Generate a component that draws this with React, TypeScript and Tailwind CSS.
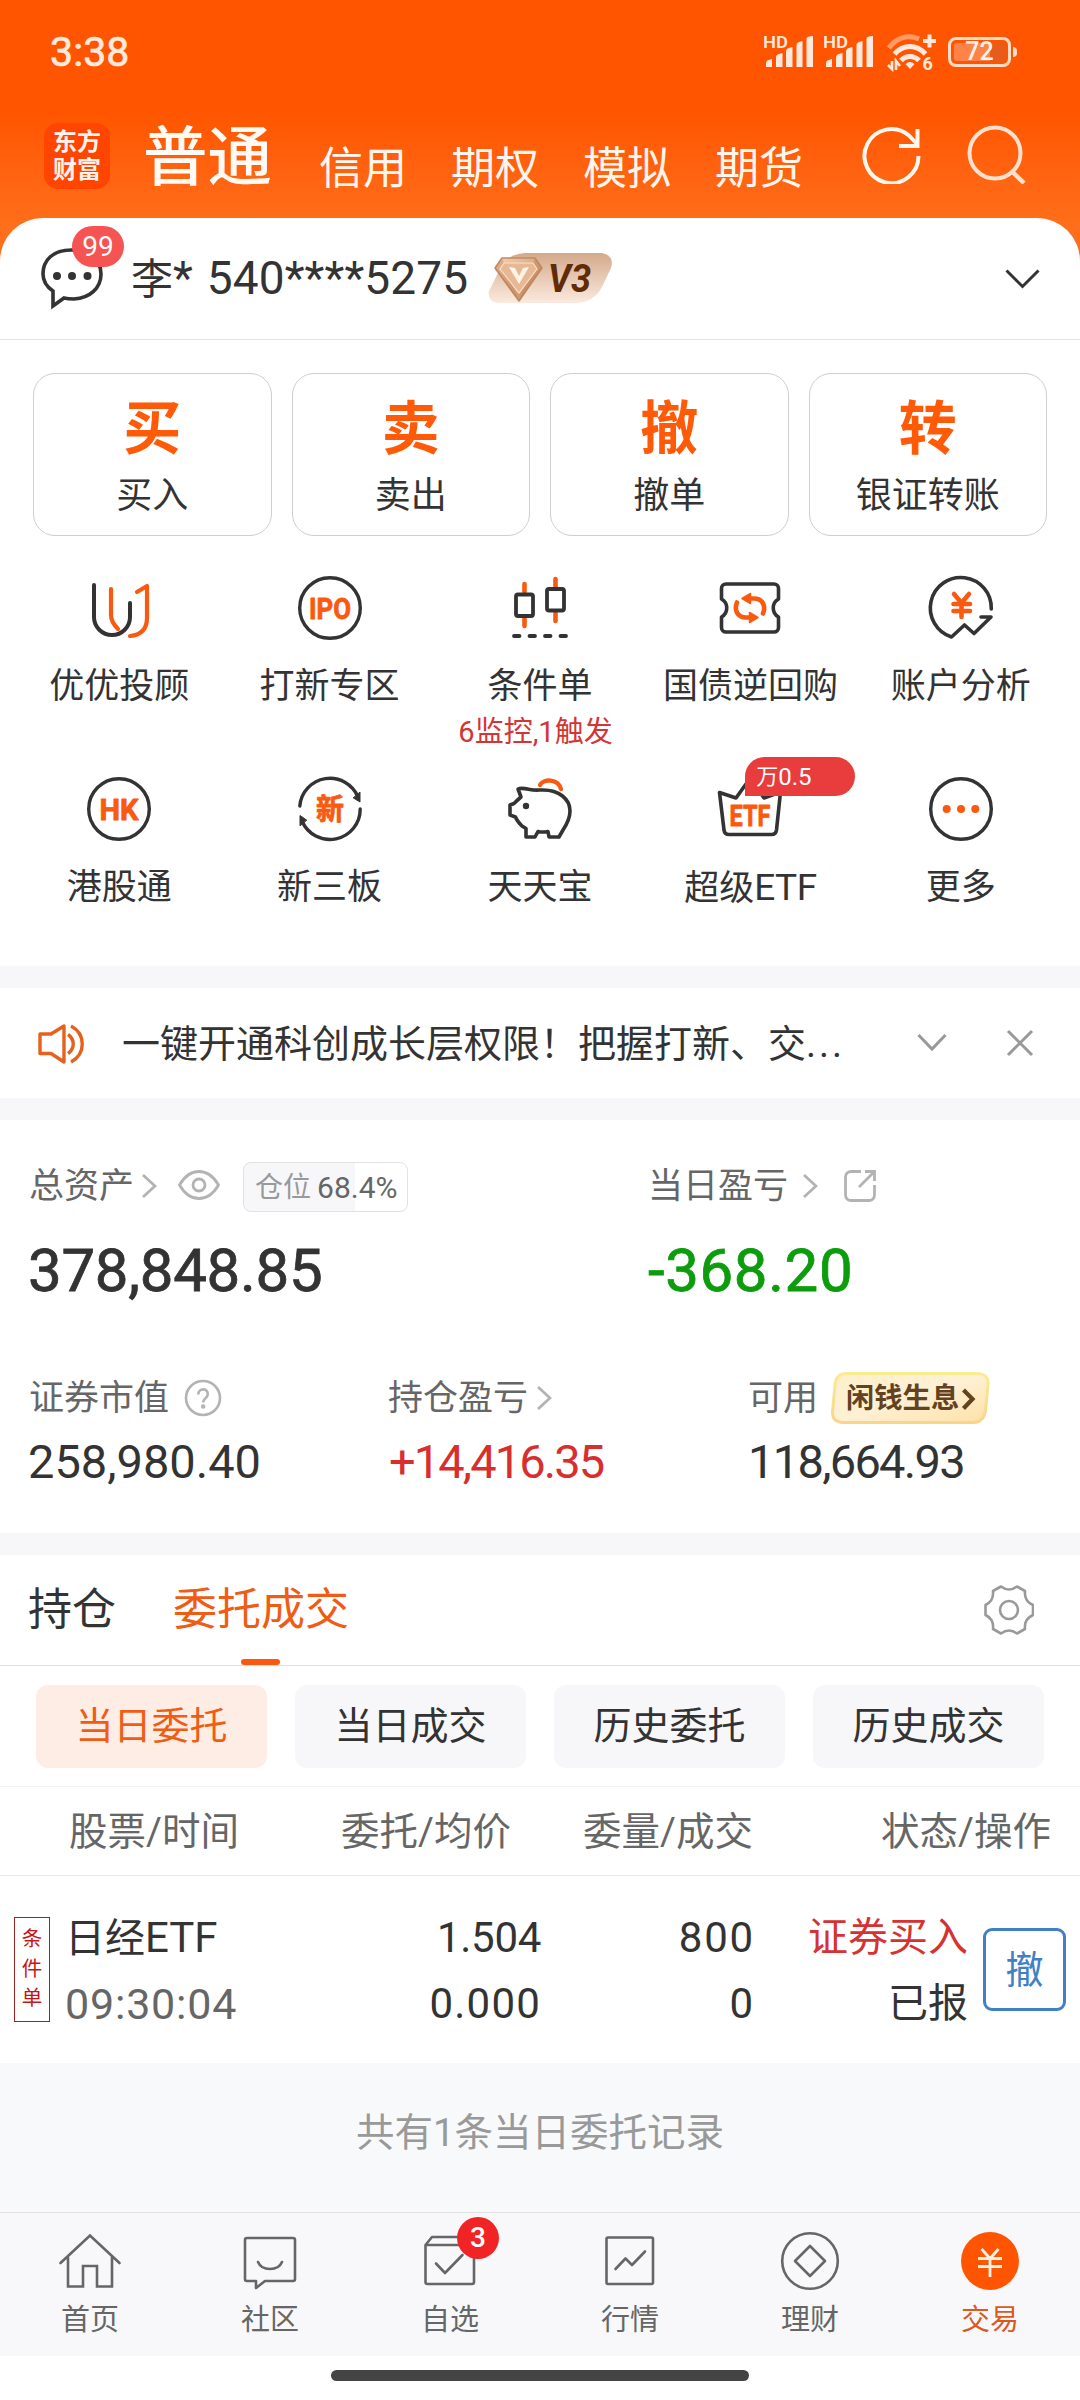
import React from "react";

const DARK = "#333333";
const ORANGE = "#fa5a0f";
const svgFont = "Roboto, 'Noto Sans CJK SC', sans-serif";

type Kids = { children?: React.ReactNode };

function Icon({ children, size = 72 }: Kids & { size?: number }) {
  return (
    <svg
      width={size}
      height={size}
      viewBox={`0 0 ${size} ${size}`}
      fill="none"
      strokeLinecap="round"
      strokeLinejoin="round"
      className="block shrink-0"
    >
      {children}
    </svg>
  );
}

function Signal() {
  return (
    <svg width="50" height="36" viewBox="0 0 50 36" className="block shrink-0" fill="#ffe9dc">
      <text x="-1" y="14" fontFamily={svgFont} fontWeight="600" fontSize="16.5" textLength="25" lengthAdjust="spacingAndGlyphs">
        HD
      </text>
      <path d="M2 33v-4q0-3 6-4v8z" />
      <path d="M12 33V23q0-3 6.500-4v14z" />
      <path d="M22 33V17q0-3 6.500-4v20z" />
      <path d="M32.500 33V11q0-3 6-4v26z" />
      <path d="M42.500 33V5q0-3 6.500-3v31z" />
    </svg>
  );
}

function Wifi() {
  return (
    <svg width="54" height="42" viewBox="0 0 54 42" className="block shrink-0" fill="none" stroke="#ffe9dc" strokeWidth="5">
      <path d="M4 17C11 7 22 3 34 8" stroke="#ff9a66" />
      <path d="M9.500 23c9-10 22-10 31 0" />
      <path d="M16 29.500c5-5.500 13-5.500 18 0" />
      <path d="M20.500 33q4.500-4 9 0l-4.500 5z" fill="#ffe9dc" stroke="none" />
      <path d="M44.500 3.500v13M38 10h13" strokeWidth="4" />
      <path d="M7 30v8l-4-4M11 39v-9l4 5" strokeWidth="2.600" />
      <text x="37.500" y="39" fontFamily={svgFont} fontSize="18" fontWeight="700" fill="#ffe9dc" stroke="none">
        6
      </text>
    </svg>
  );
}

function StatusBar() {
  return (
    <div className="flex h-[103px] items-center justify-between pl-[50px] pr-[63px]">
      <span className="mt-[1px] text-[41px] leading-none tracking-[0.100px] text-[#ffe9dc] [-webkit-text-stroke:0.700px_#ffe9dc]">3:38</span>
      <div className="flex items-center">
        <Signal />
        <div className="w-[10px]" />
        <Signal />
        <div className="w-[11px]" />
        <Wifi />
        <div className="ml-[9px] flex h-[30px] w-[63px] items-center rounded-[8px] border-[3px] border-[#ffdcc8] p-[3px]">
          <span className="w-full rounded-[3px] bg-gradient-to-r from-[#ff8347] from-[70%] to-[#e55c1c] to-[70%] text-center text-[25px] font-medium leading-[18px] text-[#fff3ec]">
            72
          </span>
        </div>
        <div className="ml-[2px] h-[10px] w-[4px] rounded-r bg-[#ffdcc8]" />
      </div>
    </div>
  );
}

function TopTabs() {
  return (
    <div className="flex h-[115px] items-start pl-[44px] pr-[54px]">
      <div className="mt-[20px] flex size-[66px] flex-col items-center justify-center rounded-[14px] bg-[#ff4500] text-[24px] font-bold leading-[28px] text-[#fff3ec]">
        <span>东方</span>
        <span>财富</span>
      </div>
      <span className="ml-[33px] mt-[15px] text-[64.500px] font-medium leading-[80px] text-[#fffaf4]">普通</span>
      <div className="ml-[47px] mt-[36px] flex gap-[44px] text-[44px] leading-[60px] text-[#fff6ee]">
        <span>信用</span>
        <span>期权</span>
        <span>模拟</span>
        <span>期货</span>
      </div>
      <div className="ml-auto mt-[21px] flex gap-[45px]">
        <Icon size={60}>
          <path d="M57.500 32A27 27 0 1 1 48 11.500L56 20" stroke="#fff6ee" strokeWidth="4" strokeLinecap="butt" />
          <path d="M56.500 5v17H38" stroke="#fff6ee" strokeWidth="4" strokeLinecap="butt" strokeLinejoin="miter" />
        </Icon>
        <Icon size={60}>
          <circle cx="29" cy="29" r="25.500" stroke="#ffe0cc" strokeWidth="4" />
          <path d="M46 47.500L58 59" stroke="#ffe0cc" strokeWidth="4.500" strokeLinecap="butt" />
        </Icon>
      </div>
    </div>
  );
}

function VipBadge() {
  return (
    <div className="relative ml-[20px] mt-[-1px] h-[50px] w-[126px]">
      <svg width="126" height="50" viewBox="0 0 126 50" className="block">
        <defs>
          <linearGradient id="vip" x1="0" y1="0" x2="0" y2="1">
            <stop offset="0" stopColor="#d3a98a" />
            <stop offset="1" stopColor="#fbeadf" />
          </linearGradient>
          <linearGradient id="gem" x1="0" y1="0" x2="1" y2="1">
            <stop offset="0" stopColor="#f7d4b4" />
            <stop offset="1" stopColor="#bd8055" />
          </linearGradient>
        </defs>
        <path d="M37 0H114q13 3 9 15l-9 19q-8 15-25 16H9Q-1 48 1 38L13 14Q20 1 37 0z" fill="url(#vip)" />
        <path d="M14 5H47l7 10-23 33L7 15z" fill="url(#gem)" stroke="#c38a62" strokeWidth="1.500" strokeLinejoin="round" />
        <path d="M14 5l-7 10 24 33zM47 5l7 10-23 33z" fill="#b9784c" opacity=".35" />
        <path d="M16 10H45l4 6-18 24L12 16z" fill="#e6b894" stroke="#fbe0c8" strokeWidth="1.200" />
        <path d="M21 14l10 17 10-17-6 1-4 8-4-8z" fill="#fff3e4" />
        <text x="60" y="39" fontFamily={svgFont} fontSize="39" fontWeight="700" fontStyle="italic" fill="#5f2c06" textLength="43" lengthAdjust="spacingAndGlyphs">
          V3
        </text>
      </svg>
    </div>
  );
}

function AccountRow() {
  return (
    <div className="flex h-[122px] items-center border-b border-[#e4e4e4] pl-[40px] pr-[40px]">
      <div className="relative mt-[-1px]">
        <svg width="64" height="64" viewBox="0 0 64 64" fill="none" className="block">
          <path
            d="M13 45v15l11-8c4 1 7 1 10 1 16-1 27-11 27-25S50 4 31.500 4 3 14 3 28c0 7 4 13 10 17z"
            stroke={DARK}
            strokeWidth="3.600"
          />
          <circle cx="17" cy="30" r="4" fill={DARK} />
          <circle cx="32" cy="30" r="4" fill={DARK} />
          <circle cx="47.500" cy="30" r="4" fill={DARK} />
        </svg>
        <div className="absolute left-[32px] top-[-20px] flex h-[41px] w-[52px] items-center justify-center rounded-full bg-[#f65353] text-[28px] leading-none text-white">
          99
        </div>
      </div>
      <div className="ml-[27px] whitespace-pre text-[46px] leading-[60px] text-[#333]">
        <span className="text-[42px]">李</span>*<span className="inline-block w-[14px]" />
        <span className="tracking-[0.100px]">540****5275</span>
      </div>
      <VipBadge />
      <svg width="35" height="20" viewBox="0 0 35 20" fill="none" className="ml-auto block">
        <path d="M1.500 1.500l16 16 16-16" stroke={DARK} strokeWidth="3" />
      </svg>
    </div>
  );
}

const actions = [
  ["买", "买入"],
  ["卖", "卖出"],
  ["撤", "撤单"],
  ["转", "银证转账"],
];

function Actions() {
  return (
    <div className="grid grid-cols-4 gap-[20px] px-[33px] pt-[33px]">
      {actions.map(([big, label]) => (
        <div key={label} className="flex h-[163px] flex-col items-center rounded-[22px] border border-[#cfcfcf]">
          <span className="mt-[15px] text-[58px] font-bold leading-[80px] text-[#ff5a08]">{big}</span>
          <span className="mt-[2px] text-[36px] leading-[50px] text-[#333]">{label}</span>
        </div>
      ))}
    </div>
  );
}

function IconText({ children, w, y }: Kids & { w: number; y: number }) {
  return (
    <text
      x={36 - w / 2}
      y={y}
      fontFamily={svgFont}
      fontWeight="700"
      fontSize="29"
      fill={ORANGE}
      stroke={ORANGE}
      strokeWidth="0.800"
      textLength={w}
      lengthAdjust="spacingAndGlyphs"
    >
      {children}
    </text>
  );
}

const Ring = () => <circle cx="36" cy="36" r="30.300" stroke={DARK} strokeWidth="3.400" />;

const services = [
  {
    label: "优优投顾",
    icon: (
      <Icon>
        <path d="M11 13V45a18 18 0 0 0 36 0V31" stroke={DARK} strokeWidth="4" />
        <path d="M28 17V43c0 6 3 10 7 14M54 20L64 14V46c0 11-6 17-17 18" stroke={ORANGE} strokeWidth="4.200" />
      </Icon>
    ),
  },
  {
    label: "打新专区",
    icon: (
      <Icon>
        <Ring />
        <IconText w={42} y={46.5}>IPO</IconText>
      </Icon>
    ),
  },
  {
    label: "条件单",
    note: "6监控,1触发",
    icon: (
      <Icon>
        <path d="M20.500 12v8M20.500 46v8M51.500 7v8M51.500 41v8" stroke={ORANGE} strokeWidth="4.600" />
        <rect x="12" y="22.500" width="17" height="21.500" rx="2" stroke={DARK} strokeWidth="3.800" />
        <rect x="43" y="17" width="17" height="21.500" rx="2" stroke={DARK} strokeWidth="3.800" />
        <path d="M10 64h5.500M25.500 64h5.500M41 64h5.500M56.500 64h5.500" stroke={DARK} strokeWidth="3.800" />
      </Icon>
    ),
  },
  {
    label: "国债逆回购",
    icon: (
      <Icon>
        <path
          d="M12 12H60a4.500 4.500 0 0 1 4.500 4.500V27c-7 4-7 14 0 18V55.500A4.500 4.500 0 0 1 60 60H12a4.500 4.500 0 0 1-4.500-4.500V45c7-4 7-14 0-18V16.500A4.500 4.500 0 0 1 12 12z"
          stroke={DARK}
          strokeWidth="3.600"
        />
        <path d="M36 26.500h4c9 0 12 8 9 15M36 45.500h-4c-9 0-12-8-9-15" stroke={ORANGE} strokeWidth="4.600" />
        <path d="M28 26.500l8.500-5v10zM44 45.500l-8.500-5v10z" fill={ORANGE} stroke={ORANGE} strokeWidth="1.500" />
      </Icon>
    ),
  },
  {
    label: "账户分析",
    icon: (
      <Icon>
        <path d="M66.300 37A30.500 30.500 0 1 0 26.500 65L39.500 53l9.500 8.500L66 45H56" stroke={DARK} strokeWidth="3.600" />
        <path d="M29 22l7.500 9 7.500-9M36.500 31v14M28.500 32h16.500M28.500 39h16.500" stroke={ORANGE} strokeWidth="4.600" />
      </Icon>
    ),
  },
  {
    label: "港股通",
    icon: (
      <Icon>
        <Ring />
        <IconText w={39} y={46.5}>HK</IconText>
      </Icon>
    ),
  },
  {
    label: "新三板",
    icon: (
      <Icon>
        <path d="M5.800 33A30.300 30.300 0 0 1 64 24M66.200 36A30.300 30.300 0 0 1 8 48" stroke={DARK} strokeWidth="3.400" />
        <path d="M66 19.500v9.500l-6.500-4zM6 52.500V42.500l6.500 4.500z" fill={DARK} stroke={DARK} strokeWidth="1" />
        <IconText w={28} y={46.5}>新</IconText>
      </Icon>
    ),
  },
  {
    label: "天天宝",
    icon: (
      <Icon>
        <path
          d="M17 24l-3-8c3-1.500 7-.5 12 .5 4 1 8 .5 13 .5 16 0 27 9 27 21 0 7-3 13-7 19l-4 7H45l-1-5.500c-4 .8-7 .8-10 0L31 64H22V55.500L18 53c-3-3-5-5-6.500-9L6 42V32l4-1.500c2-2 4-4 7-6.500z"
          stroke={DARK}
          strokeWidth="3.600"
        />
        <circle cx="22" cy="33" r="3.200" fill={DARK} />
        <path d="M36 12c3-6 18-7 21 4" stroke={ORANGE} strokeWidth="4.400" />
      </Icon>
    ),
  },
  {
    label: "超级ETF",
    badge: "0.5",
    icon: (
      <Icon>
        <path d="M5.500 19.500L22 25 32 11q4-5 8 0L50 25l16.500-6L62.500 57q-.6 4.500-5 4.500H15q-4.500 0-5-4.500z" stroke={DARK} strokeWidth="3.600" />
        <IconText w={41} y={52.5}>ETF</IconText>
      </Icon>
    ),
  },
  {
    label: "更多",
    icon: (
      <Icon>
        <Ring />
        <circle cx="21.700" cy="36" r="4" fill={ORANGE} />
        <circle cx="36" cy="36" r="4" fill={ORANGE} />
        <circle cx="50.300" cy="36" r="4" fill={ORANGE} />
      </Icon>
    ),
  },
];

function Services() {
  return (
    <div className="grid h-[430px] grid-cols-5 grid-rows-[201px_229px] px-[14px] pt-[36px]">
      {services.map((s) => (
        <div key={s.label} className="relative flex flex-col items-center">
          {s.icon}
          <span className="mt-[18px] whitespace-nowrap text-[35px] leading-[50px] text-[#333]">
            {s.label === "超级ETF" ? (
              <>
                超级<span className="text-[37px] tracking-[-0.500px]">ETF</span>
              </>
            ) : (
              s.label
            )}
          </span>
          {s.note && <span className="mr-[9px] whitespace-nowrap text-[29px] leading-[40px] text-[#d43535]">{s.note}</span>}
          {s.badge && (
            <div className="absolute left-[100px] top-[-16px] flex h-[39px] w-[110px] items-center rounded-[20px] rounded-bl-none bg-[#e93c3c] pl-[11px] text-[24px] leading-none text-white">
              <span className="text-[22px]">万</span>
              {s.badge}
            </div>
          )}
        </div>
      ))}
    </div>
  );
}

function Notice() {
  return (
    <div className="flex h-[110px] items-center bg-white pl-[36px] pr-[46px]">
      <svg width="50" height="44" viewBox="0 0 50 44" fill="none" stroke="#e5611d" strokeWidth="3.400" className="mt-[1px] block shrink-0">
        <path d="M4 12h11L28 4v36L15 31.500H4z" strokeLinejoin="round" />
        <path d="M32 12.500c7 5 7 14 0 19M35 4c15 8 15 28 0 36" />
      </svg>
      <span className="ml-[36px] mt-[2px] whitespace-nowrap text-[38px] leading-[56px] text-[#333]">
        一键开通科创成长层权限！把握打新、交<span className="tracking-[3px]">...</span>
      </span>
      <svg width="30" height="20" viewBox="0 0 30 20" fill="none" className="ml-auto block">
        <path d="M1.500 2l13.500 14 13.500-14" stroke="#999" strokeWidth="3" />
      </svg>
      <svg width="28" height="28" viewBox="0 0 28 28" fill="none" className="ml-[59px] block">
        <path d="M2 2l24 24M26 2L2 26" stroke="#999" strokeWidth="3" />
      </svg>
    </div>
  );
}

function Chevron({ className }: { className: string }) {
  return (
    <svg width="16" height="26" viewBox="0 0 16 26" fill="none" className={className}>
      <path d="M2 2l12 11L2 24" stroke="#b3b3b3" strokeWidth="2.800" />
    </svg>
  );
}

function Assets() {
  return (
    <div className="h-[413px] bg-white pt-[40px]">
      <div className="grid h-[50px] grid-cols-[648px_1fr]">
        <div className="flex items-center pl-[29px] text-[35px] leading-[50px] text-[#666]">
          <span className="mt-[2px]">总资产</span>
          <Chevron className="ml-[7px] block" />
          <svg width="44" height="32" viewBox="0 0 44 32" fill="none" stroke="#b3b3b3" strokeWidth="2.800" className="ml-[20px] mt-[-2px] block">
            <path d="M2.500 16C8 6.500 15 2.500 22 2.500S36 6.500 41.500 16C36 25.500 29 29.500 22 29.500S8 25.500 2.500 16z" />
            <circle cx="22" cy="16" r="6" />
          </svg>
          <div className="ml-[22px] mt-[1px] flex h-[50px] w-[165px] items-center rounded-[8px] border border-[#e2e2e2] bg-gradient-to-r from-[#f7f7fa] from-[68.400%] to-white to-[68.400%] pl-[11px]">
            <span className="mt-[2px] text-[28px] leading-none text-[#999]">仓位</span>
            <span className="ml-[6px] mt-[2px] text-[30px] leading-none text-[#666]">68.4%</span>
          </div>
        </div>
        <div className="flex items-center text-[35px] leading-[50px] text-[#666]">
          <span className="mt-[2px]">当日盈亏</span>
          <Chevron className="ml-[14px] block" />
          <svg width="34" height="34" viewBox="0 0 34 34" fill="none" stroke="#b3b3b3" strokeWidth="2.800" className="ml-[25px] block">
            <path d="M18 2.500H8A5.500 5.500 0 0 0 2.500 8V26A5.500 5.500 0 0 0 8 31.500H26A5.500 5.500 0 0 0 31.500 26V16" />
            <path d="M16 18L30 4M22 2.500h9.500V12" />
          </svg>
        </div>
      </div>
      <div className="mt-[21px] grid h-[80px] grid-cols-[648px_1fr] text-[60px] leading-[80px] [-webkit-text-stroke:0.800px_currentColor]">
        <span className="pl-[28px] tracking-[-0.300px] text-[#333]">378,848.85</span>
        <span className="tracking-[0.600px] text-[#0d9c0d]">-368.20</span>
      </div>
      <div className="mt-[60px] grid h-[52px] grid-cols-[388px_360px_1fr] items-center text-[35px] leading-[52px] text-[#666]">
        <div className="flex items-center pl-[29px]">
          <span className="mt-[2px]">证券市值</span>
          <svg width="40" height="40" viewBox="0 0 40 40" fill="none" stroke="#b3b3b3" strokeWidth="2.600" className="ml-[14px] block">
            <circle cx="20" cy="20" r="17" />
            <path d="M15.300 16.500c0-7 9.500-6.500 9.500-.6 0 4-4.600 4.600-4.600 8.600" />
            <circle cx="20.200" cy="28.500" r="1" />
          </svg>
        </div>
        <div className="flex items-center">
          <span className="mt-[2px]">持仓盈亏</span>
          <Chevron className="ml-[8px] block" />
        </div>
        <div className="flex items-center">
          <span className="mt-[2px]">可用</span>
          <div className="relative ml-[13px] h-[52px] w-[159px]">
            <svg width="159" height="52" viewBox="0 0 159 52" className="block">
              <defs>
                <linearGradient id="gold" x1="0" y1="0" x2="1" y2="1">
                  <stop offset="0" stopColor="#fdf0cc" />
                  <stop offset=".5" stopColor="#fef0d4" />
                  <stop offset="1" stopColor="#ffe0a6" />
                </linearGradient>
                <linearGradient id="goldEdge" x1="0" y1="0" x2="0" y2="1">
                  <stop offset="0" stopColor="#fbec91" />
                  <stop offset="1" stopColor="#f7d68b" />
                </linearGradient>
              </defs>
              <path d="M15 1.500H147q11 1 10 11L154.500 39q-2 11-12 11.500H12Q1 50 1.500 40L4 13Q5 2 15 1.500z" fill="url(#gold)" stroke="url(#goldEdge)" strokeWidth="3" />
              <path d="M132.500 18l9 9-9 9.500" fill="none" stroke="#64421f" strokeWidth="4.200" />
            </svg>
            <span className="absolute left-[15px] top-0 whitespace-nowrap text-[28.300px] font-bold leading-[54px] text-[#64421f]">闲钱生息</span>
          </div>
        </div>
      </div>
      <div className="mt-[9px] grid h-[60px] grid-cols-[389px_359px_1fr] text-[47px] leading-[60px]">
        <span className="pl-[28px] text-[#333]">258,980.40</span>
        <span className="tracking-[-1.900px] text-[#d92e2e]">+14,416.35</span>
        <span className="tracking-[-1.700px] text-[#333]">118,664.93</span>
      </div>
    </div>
  );
}

function OrderTabs() {
  return (
    <>
      <div className="flex h-[111px] items-stretch border-b border-[#e0e0e0] bg-white pl-[28px] pr-[46px] text-[44px] leading-[111px]">
        <span className="text-[#333]">持仓</span>
        <div className="relative ml-[57px] text-[#f05c14]">
          委托成交
          <div className="absolute bottom-0 left-[68px] h-[6px] w-[39px] rounded-full bg-[#fa5a0f]" />
        </div>
        <svg width="50" height="50" viewBox="0 0 50 50" fill="none" stroke="#999" strokeWidth="2.600" strokeLinejoin="round" className="ml-auto mt-[30px] block">
          <path d="M17 1.500Q25 7.500 33 1.500L41 6Q40 16 49 20V30Q40 34 41 44L33 48.500Q25 42.500 17 48.500L9 44Q10 34 1.500 30V20Q10 16 9 6z" />
          <circle cx="25" cy="25" r="9" />
        </svg>
      </div>
      <div className="grid h-[121px] grid-cols-4 gap-[28px] border-b border-[#f3f3f3] bg-white pb-[18px] pl-[36px] pr-[36px] pt-[19px] text-center text-[38px] leading-[83px] text-[#333]">
        <span className="rounded-[12px] bg-[#feede5] text-[#f05c14]">当日委托</span>
        <span className="rounded-[12px] bg-[#f7f7fa]">当日成交</span>
        <span className="rounded-[12px] bg-[#f7f7fa]">历史委托</span>
        <span className="rounded-[12px] bg-[#f7f7fa]">历史成交</span>
      </div>
    </>
  );
}

function Orders() {
  return (
    <div className="bg-white">
      <div className="grid h-[89px] grid-cols-[239px_272px_242px_298px] border-b border-[#e9e9e9] text-right text-[38.500px] leading-[89px] text-[#666]">
        <span>股票/时间</span>
        <span>委托/均价</span>
        <span>委量/成交</span>
        <span>状态/操作</span>
      </div>
      <div className="flex h-[187px] pt-[29px] text-[42px] leading-[66px] text-[#333]">
        <div className="ml-[14px] mt-[12px] flex h-[105px] w-[36px] flex-col items-center border border-[#a02020] pt-[7px] text-[20.500px] leading-[29.500px] text-[#c81414]">
          <span>条</span>
          <span>件</span>
          <span>单</span>
        </div>
        <div className="ml-[15px] w-[231px]">
          <div>
            <span className="text-[40px]">日经</span>ETF
          </div>
          <div className="text-[43px] leading-[64px] tracking-[0.800px] text-[#666]">09:30:04</div>
        </div>
        <div className="w-[245px] text-right">
          <div className="tracking-[-0.300px]">1.504</div>
          <div className="tracking-[1.200px]">0.000</div>
        </div>
        <div className="w-[214px] text-right tracking-[1.800px]">
          <div>800</div>
          <div>0</div>
        </div>
        <div className="w-[213px] text-right text-[40px]">
          <div className="text-[#d63232]">证券买入</div>
          <div>已报</div>
        </div>
        <div className="ml-[15px] mt-[23px] h-[83px] w-[83px] rounded-[9px] border-[3px] border-[#417fc6] text-center text-[38px] leading-[79px] text-[#417fc6]">撤</div>
      </div>
    </div>
  );
}

const G = "#666666";
const tabs = [
  {
    label: "首页",
    icon: (
      <Icon size={64}>
        <path d="M2.500 34L32 6.500 61.500 34M10 28V57.500H25V37H39V57.500H54V28" stroke={G} strokeWidth="2.600" strokeLinejoin="miter" />
      </Icon>
    ),
  },
  {
    label: "社区",
    icon: (
      <Icon size={64}>
        <path d="M9 9H55a2 2 0 0 1 2 2V50a2 2 0 0 1-2 2H27l-9 7V52H9a2 2 0 0 1-2-2V11a2 2 0 0 1 2-2zM20 33q3 7 12 7t12-7" stroke={G} strokeWidth="2.600" />
      </Icon>
    ),
  },
  {
    label: "自选",
    icon: (
      <Icon size={64}>
        <path d="M7.500 16L14 8H50l6 8V53q0 2-2 2H9.500q-2 0-2-2zH56M18 34.500l9 9.500L44.500 26" stroke={G} strokeWidth="2.600" />
      </Icon>
    ),
  },
  {
    label: "行情",
    icon: (
      <Icon size={64}>
        <rect x="8.500" y="8.500" width="46.500" height="46.500" rx="1.500" stroke={G} strokeWidth="2.600" />
        <path d="M17.500 40l10-10.500L34 36l13-13.500" stroke={G} strokeWidth="2.600" />
      </Icon>
    ),
  },
  {
    label: "理财",
    icon: (
      <Icon size={64}>
        <circle cx="32" cy="32" r="27.800" stroke={G} strokeWidth="2.600" />
        <path d="M32 17L47 32 32 47 17 32z" stroke={G} strokeWidth="2.600" />
      </Icon>
    ),
  },
  {
    label: "交易",
    icon: (
      <Icon size={64}>
        <circle cx="32" cy="32" r="29" fill="#ff5500" />
        <path d="M23.500 20L32 29.500 40.500 20M32 29.500V48M20 29.500H44M20 37.500H44" stroke="#fff0e6" strokeWidth="2.800" strokeLinecap="butt" />
      </Icon>
    ),
  },
];

function BottomNav() {
  return (
    <div className="grid h-[144px] grid-cols-6 border-t border-[#e1e1e4] bg-[#f8f8fb] pt-[16px]">
      {tabs.map((t) => (
        <div key={t.label} className="relative flex flex-col items-center">
          {t.icon}
          <span className={t.label === "交易" ? "mt-[7px] text-[29px] leading-[40px] text-[#d95a1c]" : "mt-[7px] text-[29px] leading-[40px] text-[#666]"}>
            {t.label}
          </span>
          {t.label === "自选" && (
            <div className="absolute left-[97px] top-[-12px] flex size-[42px] items-center justify-center rounded-full bg-[#f02424] text-[28px] font-medium leading-none text-white">
              3
            </div>
          )}
        </div>
      ))}
    </div>
  );
}

export default function App() {
  return (
    <div className="flex h-[2400px] w-[1080px] flex-col overflow-hidden bg-[#f7f7fa] font-[Roboto,'Noto_Sans_CJK_SC',sans-serif]">
      <div className="bg-gradient-to-b from-[#ff5500] from-[33%] to-[#ff6e1a] to-[66%]">
        <StatusBar />
        <TopTabs />
        <div className="rounded-t-[43px] bg-white">
          <AccountRow />
        </div>
      </div>
      <div className="bg-white">
        <Actions />
        <Services />
      </div>
      <div className="h-[22px]" />
      <Notice />
      <div className="h-[22px]" />
      <Assets />
      <div className="h-[22px]" />
      <OrderTabs />
      <Orders />
      <div className="h-[149px] bg-[#f8f9fb] text-center text-[38.500px] leading-[139px] text-[#999]">共有1条当日委托记录</div>
      <BottomNav />
      <div className="flex h-[44px] justify-center bg-white pt-[14px]">
        <div className="h-[11px] w-[418px] rounded-full bg-[#444]" />
      </div>
    </div>
  );
}
